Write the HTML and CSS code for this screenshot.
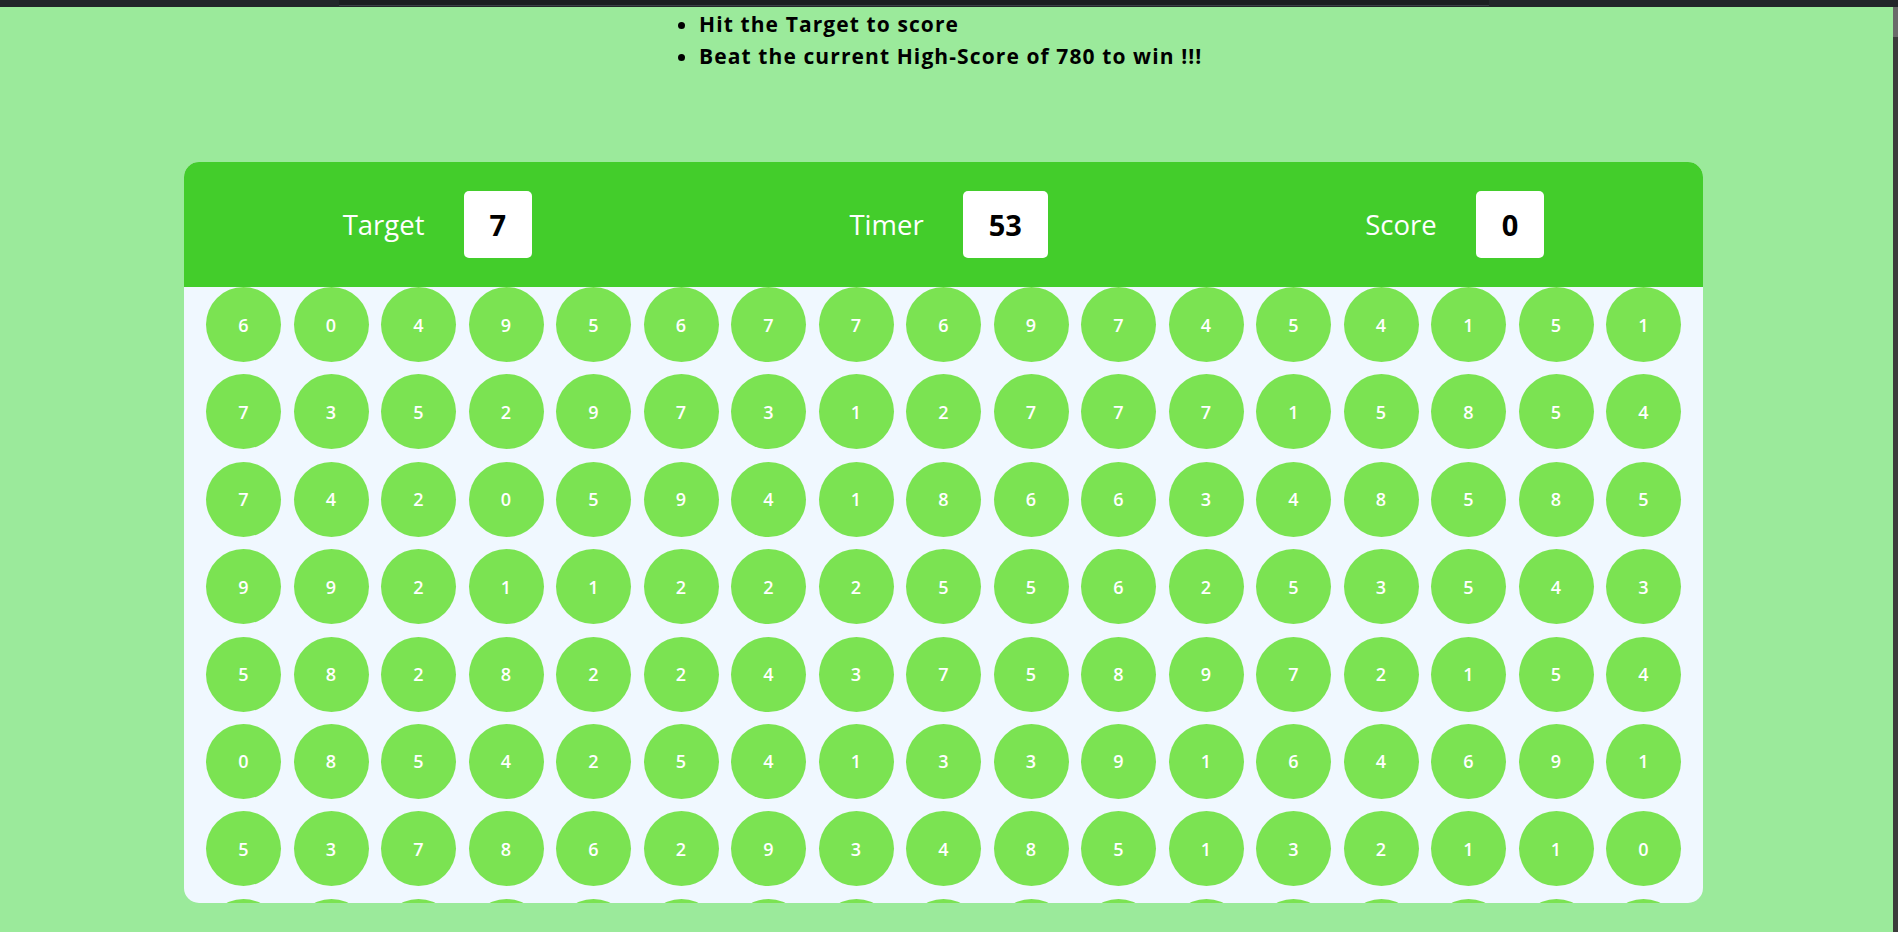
FILE: index.html
```html
<!DOCTYPE html>
<html lang="en">
<head>
  <meta charset="UTF-8" />
  <meta name="viewport" content="width=device-width, initial-scale=1" />
  <title>Bubble Hit</title>
  <link rel="stylesheet" href="styles.css">
</head>
<body>
  <div class="topbar"><div class="topbar-thumb"></div></div>
  <div class="window">
    <main class="page">
      <ul class="rules">
        <li>Hit the Target to score</li>
        <li>Beat the current High-Score of 780 to win !!!</li>
      </ul>

      <div class="panel">
        <div class="panel-top">
          <div class="stat">
            <span class="stat-label">Target</span>
            <span class="stat-box" id="target">7</span>
          </div>
          <div class="stat">
            <span class="stat-label">Timer</span>
            <span class="stat-box" id="timer">53</span>
          </div>
          <div class="stat">
            <span class="stat-label">Score</span>
            <span class="stat-box" id="score">0</span>
          </div>
        </div>
        <div class="panel-bottom" id="bubbles"></div>
      </div>
    </main>
    <div class="scrollbar"><div class="scrollbar-thumb"></div></div>
  </div>

  <script>
    const rows = [
      "60495677697454151",
      "73529731277715854",
      "74205941866348585",
      "99211222556253543",
      "58282243758972154",
      "08542541339164691",
      "53786293485132110",
      "41725360982647318"
    ];
    const bubbles = document.getElementById('bubbles');
    rows.forEach(row => {
      row.split('').forEach(n => {
        const div = document.createElement('div');
        div.className = 'bubble';
        div.textContent = n;
        bubbles.appendChild(div);
      });
    });
  </script>
</body>
</html>
```

FILE: styles.css
```css
* { box-sizing: border-box; }
html, body { margin: 0; padding: 0; height: 100%; overflow: hidden; }
body {
  font-family: "Open Sans", "Noto Sans", sans-serif;
  background: #9bea9b;
  display: flex; flex-direction: column;
}
.topbar { height: 7px; background: #22262a; flex-shrink: 0; }
.topbar-thumb { margin-left: 339px; width: 1150px; height: 6px; background: #1b1e21; border-bottom: 1px solid #3b4046; }
.window { flex: 1; display: flex; min-height: 0; }
.page { flex: 1; min-width: 0; }
.scrollbar { width: 5px; background: #3c3c3c; }
.scrollbar-thumb { height: 30px; background: #6a6a6a; }

.rules {
  margin: 1px 0 0; padding-left: 699px;
  font-size: 21px; font-weight: 700; line-height: 32px; color: #000;
  letter-spacing: 1.1px;
}

.panel {
  width: 1519px; height: 741px; margin: 90px 0 0 184px;
  border-radius: 15px; overflow: hidden;
  background: aliceblue;
}
.panel-top {
  height: 125px; background: #43cd2b;
  display: flex; align-items: center; justify-content: space-around;
}
.stat { display: flex; align-items: center; gap: 39px; }
.stat-label { color: #fff; font-size: 27.5px; font-weight: 400; }
.stat-box {
  background: #fff; border-radius: 5px; height: 67px; min-width: 66px;
  padding: 0 26px;
  display: flex; align-items: center; justify-content: center;
  font-size: 29px; font-weight: 700; color: #000;
}
.panel-bottom {
  padding: 0 22px;
  display: grid; grid-template-columns: repeat(17, 75px);
  justify-content: space-between; row-gap: 12.4px;
}
.bubble {
  width: 75px; height: 75px; border-radius: 50%;
  background: #7be352; color: #fff;
  display: flex; align-items: center; justify-content: center;
  font-size: 18px; font-weight: 600;
}
```
